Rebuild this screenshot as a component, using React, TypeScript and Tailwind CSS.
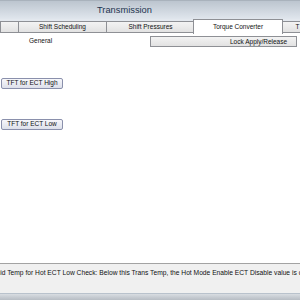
import React from 'react';

const font = { fontFamily: '"Liberation Sans", Arial, sans-serif' };

const topTabs = [
  { label: '', w: 'w-[18px]', selected: false },
  { label: 'Shift Scheduling', w: 'w-[88px]', selected: false },
  { label: 'Shift Pressures', w: 'w-[88px]', selected: false },
  { label: 'Torque Converter', w: 'w-[90px]', selected: true },
  { label: 'T', w: 'w-[30px]', selected: false },
];

const TopTab: React.FC<{ label: string; w: string; selected: boolean }> = ({ label, w, selected }) => (
  <div
    className={
      selected
        ? `${w} shrink-0 h-[15px] -mx-[1px] z-10 flex items-center justify-center bg-white border border-b-0 border-[#8e9095] text-[6.5px] text-[#111]`
        : `${w} shrink-0 h-[12px] mt-[2px] flex items-center justify-center bg-gradient-to-b from-[#f3f3f3] to-[#e2e2e2] border border-r-0 border-[#8e9095] text-[6.5px] text-[#111]`
    }
  >
    <span className="whitespace-nowrap">{label}</span>
  </div>
);

const ActionButton: React.FC<{ label: string }> = ({ label }) => (
  <button className="w-[62px] h-[11px] flex items-center justify-center rounded-[2px] border border-[#8a90ac] bg-gradient-to-b from-[#f7f7fb] to-[#dde0ea] text-[6.5px] text-[#111] leading-none">
    {label}
  </button>
);

export default function App() {
  return (
    <div className="w-[300px] h-[300px] overflow-hidden flex flex-col bg-white" style={font}>
      {/* Title bar */}
      <div className="h-[19px] shrink-0 flex items-center pl-[97px] bg-gradient-to-b from-[#bcc5cf] to-[#e0e6ed] border-t border-[#a9b2bc]">
        <span className="text-[9.3px] text-[#1f3450] leading-none pt-[2px]">Transmission</span>
      </div>

      {/* Top tab strip */}
      <div className="h-[14px] shrink-0 flex items-start bg-[#e3e8ee] border-b border-[#8e9095]">
        {topTabs.map((t, i) => (
          <TopTab key={i} {...t} />
        ))}
      </div>

      {/* Second tab strip */}
      <div className="h-[14px] shrink-0 flex items-end bg-white">
        <div className="w-[150px] h-[14px] flex items-center pl-[29px] pt-[1px] text-[6.5px] text-[#111]">General</div>
        <div className="w-[147px] h-[11px] flex items-center pl-[79px] bg-gradient-to-b from-[#f3f3f3] to-[#e2e2e2] border border-[#8e9095] text-[6.5px] text-[#111] whitespace-nowrap">
          Lock Apply/Release
        </div>
      </div>

      {/* Content */}
      <div className="flex-1 flex flex-col pl-[1px] pt-[31px] gap-[30px] bg-white">
        <ActionButton label="TFT for ECT High" />
        <ActionButton label="TFT for ECT Low" />
      </div>

      {/* Status area */}
      <div className="h-[31px] shrink-0 bg-[#f0f0f0] border-t border-[#a3a3a3] border-b border-b-[#b9c2cc] pt-[6px] overflow-hidden">
        <div className="whitespace-nowrap -ml-[9px] text-[6.7px] text-[#111] leading-none">
          Fluid Temp for Hot ECT Low Check: Below this Trans Temp, the Hot Mode Enable ECT Disable value is checked.
        </div>
      </div>
      <div className="h-[6px] shrink-0 bg-gradient-to-b from-[#d9dde2] to-[#b7bdc4]" />
    </div>
  );
}
